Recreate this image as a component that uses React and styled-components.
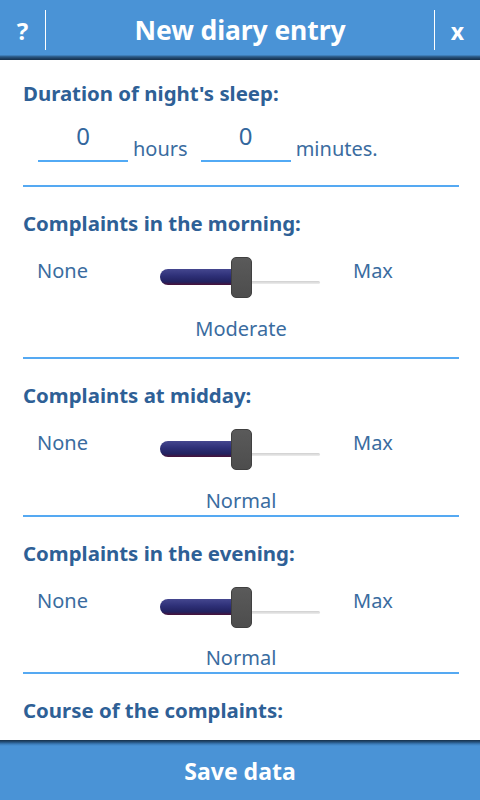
import React from "react";
import styled, { createGlobalStyle } from "styled-components";

const Global = createGlobalStyle`
  html, body { margin: 0; padding: 0; background: #ffffff; }
  body { font-family: "Noto Sans", "Open Sans", sans-serif; }
`;

const Page = styled.div`
  width: 480px;
  height: 800px;
  display: flex;
  flex-direction: column;
  overflow: hidden;
  background: #ffffff;
`;

const Header = styled.header`
  height: 60px;
  flex: none;
  display: grid;
  grid-template-columns: 46px 1fr 46px;
  align-items: start;
  background: linear-gradient(
    to bottom,
    #4a93d6 0px,
    #4a93d6 55px,
    #33689a 56px,
    #20456a 58px,
    #152f4a 60px
  );
  color: #ffffff;
`;

const HeaderButton = styled.div`
  margin-top: 10px;
  height: 40px;
  display: flex;
  align-items: center;
  justify-content: center;
  font-weight: 700;
  font-size: ${(p) => (p.$side === "left" ? 24 : 23)}px;
  line-height: 40px;
  padding-top: 2px;
  box-sizing: border-box;
  border-left: ${(p) => (p.$side === "right" ? "1px solid #ffffff" : "none")};
  border-right: ${(p) => (p.$side === "left" ? "1px solid #ffffff" : "none")};
`;

const Title = styled.h1`
  margin: 0;
  font-size: 26.5px;
  font-weight: 700;
  line-height: 56px;
  padding-top: 2px;
  text-align: center;
  letter-spacing: -0.1px;
`;

const Content = styled.main`
  flex: 1;
  overflow: hidden;
  padding: 0 21px 0 23px;
`;

const Section = styled.section`
  display: flex;
  flex-direction: column;
  padding-top: ${(p) => (p.$first ? 19 : 22)}px;
  padding-bottom: ${(p) => p.$pb || 0}px;
  border-bottom: ${(p) => (p.$last ? "none" : "2px solid #55a9f2")};
`;

const SectionTitle = styled.h2`
  margin: 0;
  font-size: 20.4px;
  line-height: 28px;
  font-weight: 700;
  color: #2e6096;
`;

const InputRow = styled.div`
  display: flex;
  align-items: flex-end;
  padding-left: 15px;
`;

const Field = styled.div`
  width: 90px;
  box-sizing: border-box;
  padding: 14px 0 9px;
  border-bottom: 2px solid #52aaf5;
  font-size: 24px;
  line-height: 30px;
  text-align: center;
  color: #33679d;
  margin-left: ${(p) => p.$ml || 0}px;
`;

const Unit = styled.span`
  font-size: 20px;
  line-height: 28px;
  color: #3a6ca0;
  margin-left: 5px;
  margin-bottom: -1px;
`;

const SliderRow = styled.div`
  margin-top: 18px;
  height: 44px;
  display: grid;
  grid-template-columns: 123px 160px 1fr;
  align-items: start;
  padding-left: 14px;
`;

const EndLabel = styled.span`
  font-size: 20px;
  line-height: 32px;
  color: #3a6ca0;
  margin-left: ${(p) => p.$ml || 0}px;
`;

const Slider = styled.div`
  position: relative;
  width: 160px;
  height: 41px;
  margin-top: 2px;
`;

const Fill = styled.div`
  position: absolute;
  left: 0;
  top: 12px;
  height: 16px;
  border-radius: 8px 0 0 8px;
  background: linear-gradient(to bottom, #45478f 0%, #2f3179 40%, #222260 80%, #4a1238 100%);
`;

const Rail = styled.div`
  position: absolute;
  right: 0;
  top: 24px;
  height: 3px;
  border-radius: 0 2px 2px 0;
  background: linear-gradient(to bottom, #cfcfcf, #ededed);
`;

const Thumb = styled.div`
  position: absolute;
  top: 0;
  width: 21px;
  height: 41px;
  box-sizing: border-box;
  border-radius: 5px;
  border: 1px solid #404040;
  background: linear-gradient(to bottom, #5a5a5a, #4d4d4d);
`;

const ValueLabel = styled.div`
  margin-top: ${(p) => p.$mt || 16}px;
  font-size: 20px;
  line-height: 28px;
  color: #3a6ca0;
  text-align: center;
`;

const Footer = styled.footer`
  height: 60px;
  flex: none;
  box-sizing: border-box;
  padding-top: 2px;
  background: linear-gradient(
    to bottom,
    #16304a 0px,
    #24507a 2px,
    #3b7bb8 4px,
    #4a93d6 6px,
    #4a93d6 100%
  );
  color: #ffffff;
  font-size: 23px;
  font-weight: 700;
  line-height: 58px;
  text-align: center;
`;

function RangeSlider({ value }) {
  const thumbLeft = Math.round(value * (160 - 21));
  return (
    <Slider>
      <Fill style={{ width: thumbLeft + 10 }} />
      <Rail style={{ left: thumbLeft + 10 }} />
      <Thumb style={{ left: thumbLeft }} />
    </Slider>
  );
}

function ComplaintSection({ title, label, pb, mt }) {
  return (
    <Section $pb={pb}>
      <SectionTitle>{title}</SectionTitle>
      <SliderRow>
        <EndLabel>None</EndLabel>
        <RangeSlider value={0.51} />
        <EndLabel $ml={33}>Max</EndLabel>
      </SliderRow>
      <ValueLabel $mt={mt}>{label}</ValueLabel>
    </Section>
  );
}

export default function App() {
  return (
    <>
      <Global />
      <Page>
        <Header>
          <HeaderButton $side="left">?</HeaderButton>
          <Title>New diary entry</Title>
          <HeaderButton $side="right">x</HeaderButton>
        </Header>
        <Content>
          <Section $first $pb={23}>
            <SectionTitle>Duration of night's sleep:</SectionTitle>
            <InputRow>
              <Field>0</Field>
              <Unit>hours</Unit>
              <Field $ml={13}>0</Field>
              <Unit>minutes.</Unit>
            </InputRow>
          </Section>
          <ComplaintSection title="Complaints in the morning:" label="Moderate" pb={14} />
          <ComplaintSection title="Complaints at midday:" label="Normal" />
          <ComplaintSection title="Complaints in the evening:" label="Normal" mt={15} />
          <Section $last>
            <SectionTitle>Course of the complaints:</SectionTitle>
          </Section>
        </Content>
        <Footer>Save data</Footer>
      </Page>
    </>
  );
}
